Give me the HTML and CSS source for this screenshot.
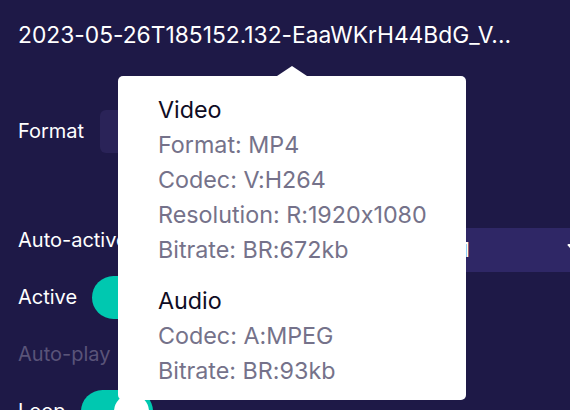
FILE: index.html
```html
<!DOCTYPE html>
<html lang="en">
<head>
    <meta charset="UTF-8">
    <meta name="viewport" content="width=device-width, initial-scale=1.0">
    <title>Clip settings</title>
    <link rel="stylesheet" href="styles.css">
</head>
<body>
    <div class="panel">
        <h1 class="file-name">2023-05-26T185152.132-EaaWKrH44BdG_V...</h1>

        <div class="settings">
            <div class="row row-format">
                <span class="label">Format</span>
                <div class="select small"></div>
            </div>
            <div class="row row-top">
                <span class="label">Auto-active</span>
                <div class="select wide">
                    <span class="select-value">Channel 1</span>
                    <svg class="caret" width="12" height="8" viewBox="0 0 12 8">
                        <path d="M1.5 1h9a1 1 0 0 1 .8 1.6l-4.5 4.6a1.1 1.1 0 0 1-1.6 0L.7 2.6A1 1 0 0 1 1.5 1z" fill="#ffffff"/>
                    </svg>
                </div>
            </div>
            <div class="row">
                <span class="label">Active</span>
                <div class="toggle on"><span class="knob"></span></div>
            </div>
            <div class="row">
                <span class="label disabled">Auto-play</span>
            </div>
            <div class="row">
                <span class="label">Loop</span>
                <div class="toggle on"><span class="knob"></span></div>
            </div>
        </div>

        <div class="popover">
            <div class="popover-section">
                <div class="popover-title">Video</div>
                <div class="popover-line">Format: MP4</div>
                <div class="popover-line">Codec: V:H264</div>
                <div class="popover-line">Resolution: R:1920x1080</div>
                <div class="popover-line">Bitrate: BR:672kb</div>
            </div>
            <div class="popover-section">
                <div class="popover-title">Audio</div>
                <div class="popover-line">Codec: A:MPEG</div>
                <div class="popover-line">Bitrate: BR:93kb</div>
            </div>
        </div>
    </div>
</body>
</html>
```

FILE: styles.css
```css
* {
    margin: 0;
    padding: 0;
    box-sizing: border-box;
}

body {
    font-family: Inter, 'Noto Sans', sans-serif;
    font-feature-settings: 'calt' 0;
    background: #1e1947;
    color: #ffffff;
    overflow: hidden;
}

.panel {
    position: relative;
    padding: 17px 0 0 18px;
    height: 410px;
}

.file-name {
    font-size: 22.8px;
    font-weight: 400;
    line-height: 36px;
    white-space: nowrap;
}

.settings {
    margin-top: 57px;
    display: flex;
    flex-direction: column;
    gap: 14px;
}

.row {
    display: flex;
    align-items: center;
    gap: 15px;
    height: 43px;
}

.row-format {
    margin-bottom: 52px;
}

.row-top {
    align-items: flex-start;
}

.label {
    font-size: 20px;
    line-height: 43px;
    white-space: nowrap;
}

.label.disabled {
    color: #5a5479;
}

.select {
    height: 43px;
    border-radius: 6px;
    background: #2a2358;
    display: flex;
    align-items: center;
}

.select.small {
    width: 120px;
    margin-left: 1px;
}

.select.wide {
    flex: 1;
    height: 44px;
    margin-top: 9px;
    margin-right: -30px;
    padding-right: 21px;
    background: #2f2766;
}

.select-value {
    font-size: 20px;
    margin-left: auto;
    margin-right: 97px;
}

.caret {
    margin-bottom: 6px;
}

.toggle {
    width: 72px;
    height: 43px;
    border-radius: 22px;
    background: #00c8b0;
    display: flex;
    align-items: center;
    padding: 0 4px;
}

.toggle.on {
    justify-content: flex-end;
}

.knob {
    width: 35px;
    height: 35px;
    border-radius: 50%;
    background: #ffffff;
}

/* media info popover */
.popover {
    position: absolute;
    left: 118px;
    top: 76px;
    width: 348px;
    height: 324px;
    background: #ffffff;
    border-radius: 5px;
    padding: 16px 20px 0 40px;
}

.popover::before {
    content: '';
    position: absolute;
    top: -10px;
    left: 159px;
    border-left: 15px solid transparent;
    border-right: 15px solid transparent;
    border-bottom: 10px solid #ffffff;
}

.popover-section {
    margin-bottom: 16px;
}

.popover-title,
.popover-line {
    font-size: 23.3px;
    line-height: 35px;
}

.popover-title {
    color: #0f0c24;
}

.popover-line {
    color: #75728a;
}
```
